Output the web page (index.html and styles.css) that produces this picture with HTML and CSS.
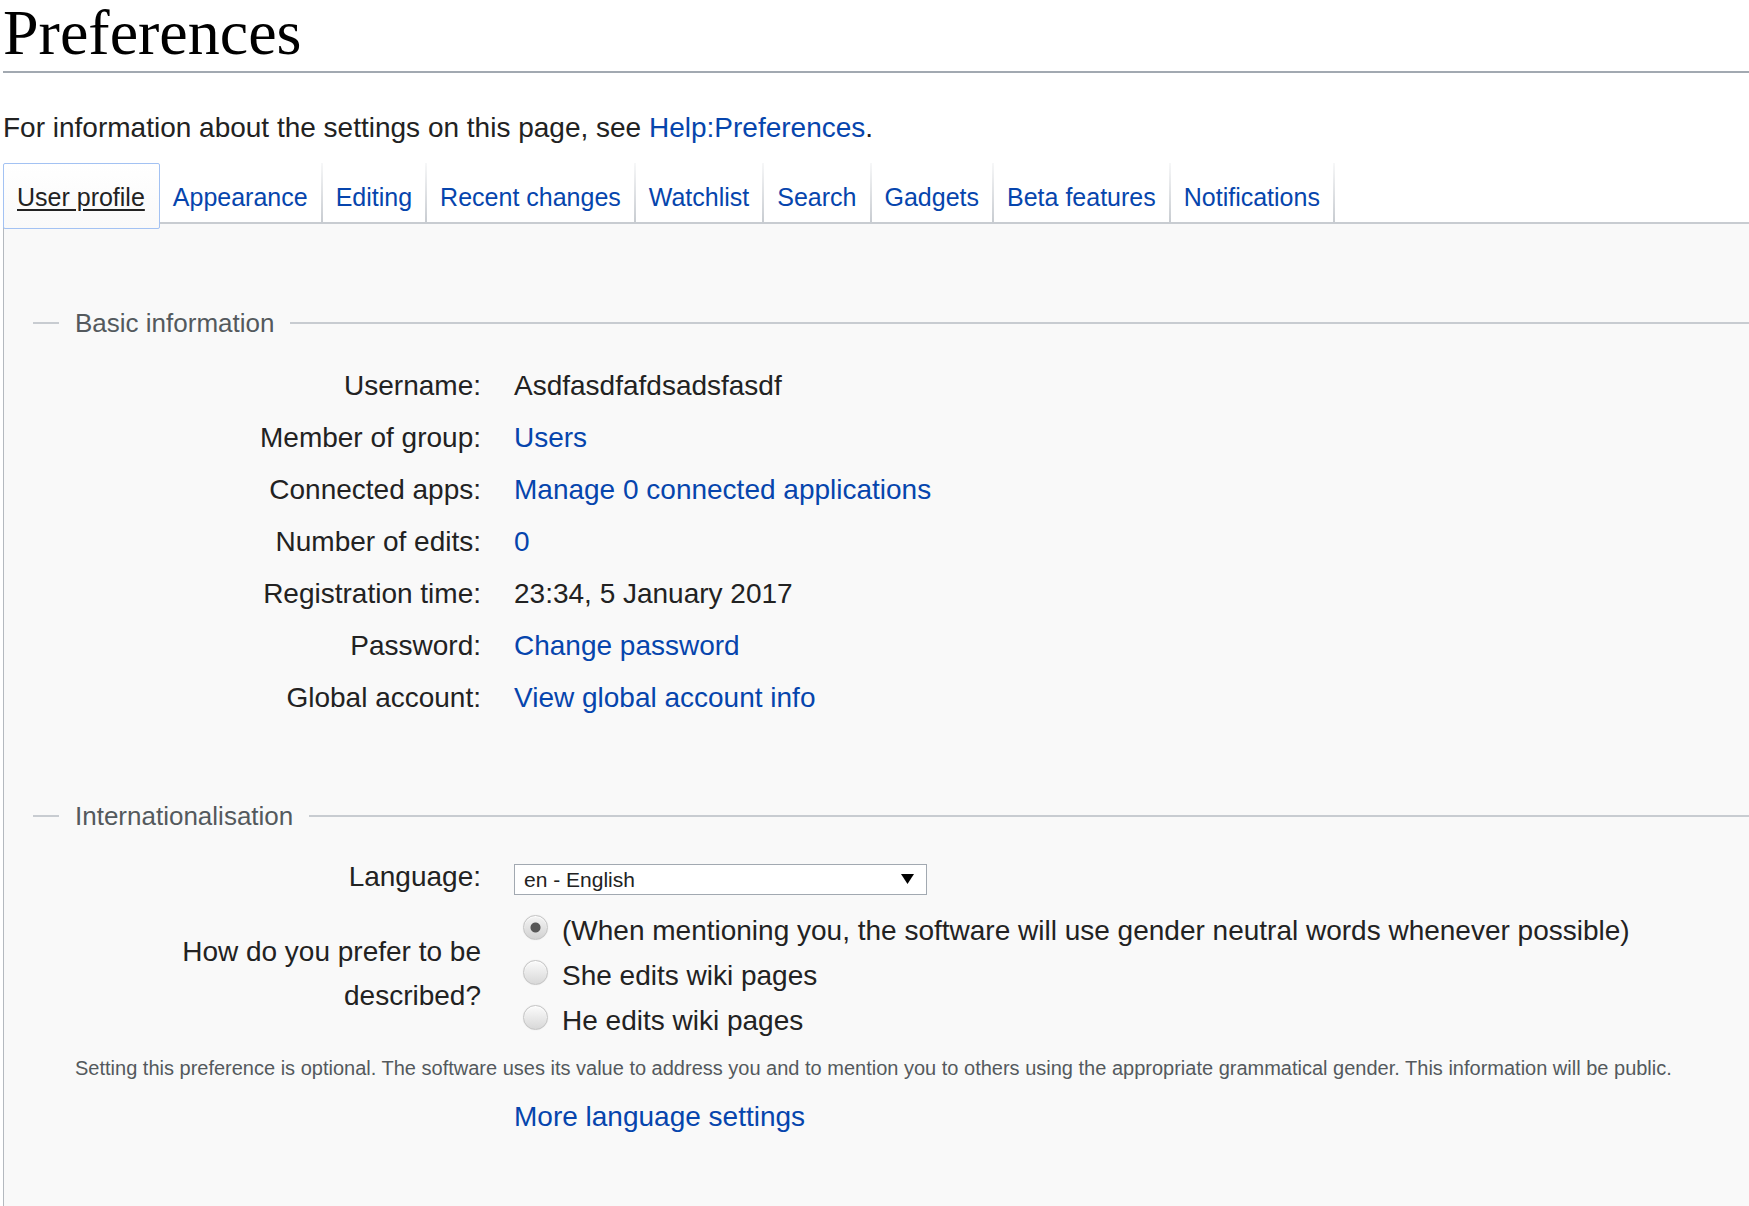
FILE: index.html
```html
<!DOCTYPE html>
<html lang="en">
<head>
<meta charset="utf-8">
<title>Preferences</title>
<link rel="stylesheet" href="styles.css">
</head>
<body>
<div class="page">
  <h1 class="title">Preferences</h1>
  <p class="intro">For information about the settings on this page, see <a class="link" href="#">Help:Preferences</a>.</p>

  <nav class="tabs">
    <a class="tab tab-active" href="#">User profile</a>
    <a class="tab" href="#">Appearance</a>
    <a class="tab" href="#">Editing</a>
    <a class="tab" href="#">Recent changes</a>
    <a class="tab" href="#">Watchlist</a>
    <a class="tab" href="#">Search</a>
    <a class="tab" href="#">Gadgets</a>
    <a class="tab" href="#">Beta features</a>
    <a class="tab" href="#">Notifications</a>
  </nav>

  <div class="panel">
    <section class="fs fs-first">
      <div class="legend"><span class="legend-text">Basic information</span></div>
      <div class="fs-body">
        <div class="row"><div class="label">Username:</div><div class="value">Asdfasdfafdsadsfasdf</div></div>
        <div class="row"><div class="label">Member of group:</div><div class="value"><a class="link" href="#">Users</a></div></div>
        <div class="row"><div class="label">Connected apps:</div><div class="value"><a class="link" href="#">Manage 0 connected applications</a></div></div>
        <div class="row"><div class="label">Number of edits:</div><div class="value"><a class="link" href="#">0</a></div></div>
        <div class="row"><div class="label">Registration time:</div><div class="value">23:34, 5 January 2017</div></div>
        <div class="row"><div class="label">Password:</div><div class="value"><a class="link" href="#">Change password</a></div></div>
        <div class="row"><div class="label">Global account:</div><div class="value"><a class="link" href="#">View global account info</a></div></div>
      </div>
    </section>

    <section class="fs">
      <div class="legend"><span class="legend-text">Internationalisation</span></div>
      <div class="fs-body">
        <div class="row row-center">
          <div class="label">Language:</div>
          <div class="value">
            <div class="select">
              <span class="select-text">en - English</span>
              <svg class="select-arrow" width="13" height="10" viewBox="0 0 13 10"><polygon points="0,0 13,0 6.5,10" fill="#000"/></svg>
            </div>
          </div>
        </div>
        <div class="row row-center">
          <div class="label">How do you prefer to be described?</div>
          <div class="value radio-list">
            <div class="radio-opt"><span class="radio radio-checked"></span><span>(When mentioning you, the software will use gender neutral words whenever possible)</span></div>
            <div class="radio-opt"><span class="radio"></span><span>She edits wiki pages</span></div>
            <div class="radio-opt"><span class="radio"></span><span>He edits wiki pages</span></div>
          </div>
        </div>
        <p class="help">Setting this preference is optional. The software uses its value to address you and to mention you to others using the appropriate grammatical gender. This information will be public.</p>
        <div class="row row-more">
          <div class="label"></div>
          <div class="value"><a class="link" href="#">More language settings</a></div>
        </div>
      </div>
    </section>
  </div>
</div>
</body>
</html>
```

FILE: styles.css
```css
html, body {
  margin: 0;
  padding: 0;
  background: #fff;
}

body {
  font-family: "Liberation Sans", Arial, sans-serif;
  color: #222;
  overflow: hidden;
}

.page {
  margin-left: 3px;
}

.link {
  color: #0645ad;
  text-decoration: none;
}

.title {
  margin: 0;
  font-family: "Liberation Serif", "Times New Roman", serif;
  font-weight: normal;
  font-size: 64px;
  line-height: 64px;
  padding-top: 1px;
  padding-bottom: 6px;
  border-bottom: 2px solid #a2a9b1;
  color: #000;
}

.intro {
  margin: 33px 0 12px;
  font-size: 28px;
  line-height: 44.8px;
}

/* Tabs */
.tabs {
  display: flex;
  align-items: flex-start;
  border-bottom: 2px solid #c8ccd1;
  height: 59px;
}

.tab {
  display: block;
  font-size: 25px;
  line-height: 30px;
  padding: 19px 15px 10px 13px;
  color: #0645ad;
  text-decoration: none;
  white-space: nowrap;
  background: linear-gradient(to bottom, rgba(200, 204, 209, 0.15), #c8ccd1) right top / 2px 100% no-repeat;
}

.tab-active {
  position: relative;
  z-index: 1;
  color: #222;
  text-decoration: underline;
  text-decoration-thickness: 2px;
  text-underline-offset: 3px;
  padding: 18px 14px 16px 13px;
  border: 1px solid #a3c2f3;
  border-radius: 2px;
  margin-bottom: -7px;
  background: linear-gradient(to bottom, #ffffff, #f9f9f9);
}

/* Panel */
.panel {
  background: #f9f9f9;
  border-left: 1px solid #b4b9bf;
  padding: 78px 0 0 29px;
  min-height: 1000px;
}

.fs-first {
  margin-bottom: 70px;
}

.legend {
  display: flex;
  align-items: center;
  height: 42px;
  margin-bottom: 17px;
}

.legend::before {
  content: "";
  width: 26px;
  border-top: 2px solid #c8ccd1;
}

.legend::after {
  content: "";
  flex: 1;
  border-top: 2px solid #c8ccd1;
}

.legend-text {
  padding: 0 16px;
  font-size: 26px;
  line-height: 42px;
  color: #54595d;
}

.fs-body {
  padding-left: 42px;
}

.row {
  display: grid;
  grid-template-columns: 406px 1fr;
  column-gap: 33px;
  padding: 3.6px 0;
  font-size: 28px;
  line-height: 44.8px;
}

.fs-first + .fs .legend {
  margin-bottom: 15px;
}

.row-center {
  align-items: center;
}

.label {
  text-align: right;
}

/* Select */
.select {
  box-sizing: border-box;
  width: 413px;
  height: 31px;
  margin-top: 3px;
  border: 1px solid #a2a9b1;
  background: #fff;
  display: flex;
  align-items: center;
  justify-content: space-between;
  padding: 0 12px 0 9px;
  font-size: 21px;
  line-height: 29px;
  color: #222;
}

.select-arrow {
  display: block;
}

/* Radios */
.radio-list {
  margin-top: 2px;
  margin-bottom: -2px;
}

.radio-opt {
  display: flex;
  align-items: center;
  height: 44.8px;
  white-space: nowrap;
}

.radio {
  box-sizing: border-box;
  flex: none;
  width: 25px;
  height: 25px;
  margin: 0 14px 8px 9px;
  border-radius: 50%;
  border: 1px solid #c4c4c4;
  background: linear-gradient(to bottom, #fbfbfb, #d8d8d8);
  box-shadow: inset 0 1px 1px #fff, 0 0 1px rgba(0, 0, 0, 0.15);
}

.radio-checked {
  background:
    radial-gradient(circle at center, #575757 0, #575757 4.5px, rgba(87, 87, 87, 0) 5.5px),
    linear-gradient(to bottom, #f4f4f4, #d2d2d2);
}

.help {
  margin: 7px 0 0;
  font-size: 20px;
  line-height: 32px;
  color: #54595d;
  white-space: nowrap;
}

.row-more {
  margin-top: 7px;
}
```
